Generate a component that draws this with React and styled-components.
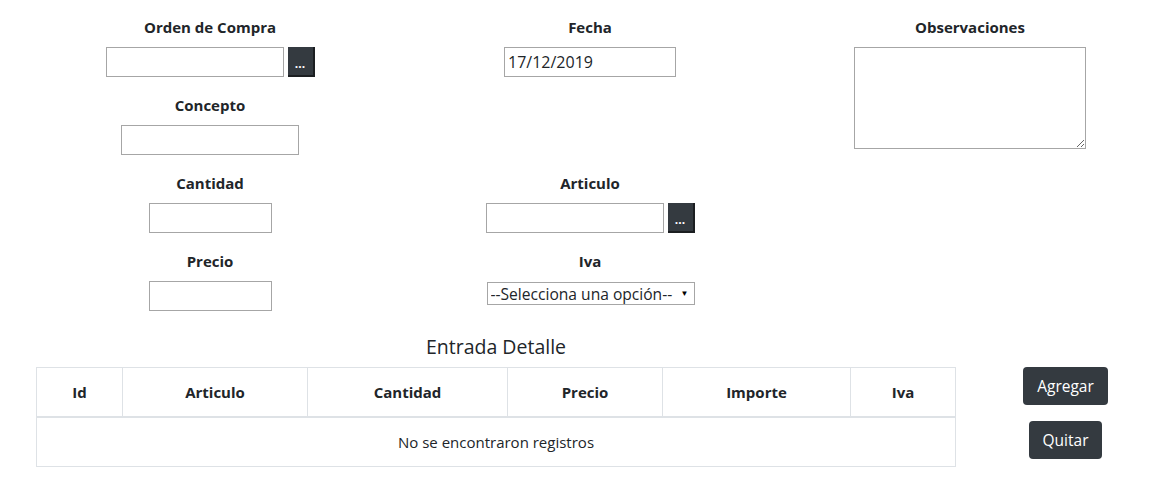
import styled, { createGlobalStyle } from "styled-components";

const GlobalStyle = createGlobalStyle`
  body {
    margin: 0;
    background: #ffffff;
    font-family: "Open Sans", "Noto Sans", sans-serif;
    font-size: 16px;
    color: #212529;
  }
  * {
    box-sizing: border-box;
  }
`;

export default function App() {
  return (
    <>
      <GlobalStyle />
      <Page>
        <FormGrid>
          <Group>
            <Label>Orden de Compra</Label>
            <Field>
              <Input width="178px" />
              <DotsButton>...</DotsButton>
            </Field>
          </Group>
          <Group>
            <Label>Fecha</Label>
            <Field>
              <Input width="172px" defaultValue="17/12/2019" />
            </Field>
          </Group>
          <ObsGroup>
            <Label>Observaciones</Label>
            <Field>
              <TextArea />
            </Field>
          </ObsGroup>

          <Group>
            <Label>Concepto</Label>
            <Field>
              <Input width="178px" />
            </Field>
          </Group>
          <Group />

          <Group>
            <Label>Cantidad</Label>
            <Field>
              <Input width="123px" />
            </Field>
          </Group>
          <Group>
            <Label>Articulo</Label>
            <Field>
              <Input width="178px" />
              <DotsButton>...</DotsButton>
            </Field>
          </Group>
          <Group />

          <Group>
            <Label>Precio</Label>
            <Field>
              <Input width="123px" />
            </Field>
          </Group>
          <Group>
            <Label>Iva</Label>
            <Field>
              <SelectBox>
                <Select defaultValue="">
                  <option value="">--Selecciona una opción--</option>
                </Select>
                <Arrow>▼</Arrow>
              </SelectBox>
            </Field>
          </Group>
        </FormGrid>

        <DetailRow>
          <TableCol>
            <Heading>Entrada Detalle</Heading>
            <Table>
              <thead>
                <tr>
                  <Th w="86px">Id</Th>
                  <Th w="185px">Articulo</Th>
                  <Th w="200px">Cantidad</Th>
                  <Th w="155px">Precio</Th>
                  <Th w="188px">Importe</Th>
                  <Th>Iva</Th>
                </tr>
              </thead>
              <tbody>
                <tr>
                  <Td colSpan={6}>No se encontraron registros</Td>
                </tr>
              </tbody>
            </Table>
          </TableCol>
          <ButtonCol>
            <DarkButton>Agregar</DarkButton>
            <DarkButton>Quitar</DarkButton>
          </ButtonCol>
        </DetailRow>
      </Page>
    </>
  );
}

const Page = styled.div`
  width: 1140px;
  margin-left: 20px;
  padding-top: 15px;
`;

const FormGrid = styled.div`
  display: grid;
  grid-template-columns: repeat(3, 380px);
`;

const Group = styled.div`
  display: flex;
  flex-direction: column;
  align-items: center;
  padding: 0 15px;
  margin-bottom: 16px;
`;

const ObsGroup = styled(Group)`
  grid-row: 1 / 3;
  grid-column: 3;
`;

const Label = styled.label`
  font-weight: 700;
  font-size: 15px;
  line-height: 24px;
  margin-bottom: 8px;
`;

const Field = styled.div`
  display: flex;
  gap: 4px;
  align-items: flex-start;
`;

const Input = styled.input`
  width: ${(p) => p.width};
  height: 30px;
  border: 1px solid #a6a6a6;
  padding: 1px 3px;
  font-family: inherit;
  font-size: 16px;
  color: #212529;
  outline: none;
`;

const DotsButton = styled.button`
  width: 27px;
  height: 30px;
  background: #343a40;
  color: #ffffff;
  border: none;
  border-right: 2px solid #1b1e21;
  border-bottom: 2px solid #1b1e21;
  font-family: inherit;
  font-size: 12px;
  font-weight: 700;
  padding: 6px 0 0;
  line-height: 1;
`;

const TextArea = styled.textarea`
  width: 232px;
  height: 102px;
  border: 1px solid #a6a6a6;
  font-family: inherit;
  resize: both;
  outline: none;
`;

const SelectBox = styled.div`
  position: relative;
  width: 208px;
  height: 23px;
  margin-top: 1px;
  margin-left: 1px;
`;

const Select = styled.select`
  appearance: none;
  width: 100%;
  height: 100%;
  border: 1px solid #a6a6a6;
  border-radius: 0;
  background: #ffffff;
  padding: 0 0 0 3px;
  font-family: inherit;
  font-size: 15.6px;
  color: #212529;
  outline: none;
`;

const Arrow = styled.span`
  position: absolute;
  right: 6px;
  top: 5px;
  font-size: 8px;
  color: #000000;
  pointer-events: none;
`;

const DetailRow = styled.div`
  display: flex;
`;

const TableCol = styled.div`
  width: 951px;
  padding: 0 15px 0 16px;
`;

const Heading = styled.h4`
  margin: 8px 0 8px;
  text-align: center;
  font-size: 19.5px;
  font-weight: 500;
  line-height: 24px;
`;

const Table = styled.table`
  width: 920px;
  border-collapse: collapse;
  border: 1px solid #dee2e6;
`;

const Th = styled.th`
  width: ${(p) => p.w || "auto"};
  height: 49px;
  border: 1px solid #dee2e6;
  border-bottom: 2px solid #dee2e6;
  font-size: 15px;
  font-weight: 700;
  text-align: center;
  vertical-align: middle;
`;

const Td = styled.td`
  height: 50px;
  border: 1px solid #dee2e6;
  text-align: center;
  font-size: 15px;
`;

const ButtonCol = styled.div`
  width: 189px;
  padding: 40px 15px 0;
  display: flex;
  flex-direction: column;
  align-items: center;
  gap: 16px;
`;

const DarkButton = styled.button`
  height: 38px;
  padding: 0 14px;
  background: #343a40;
  color: #ffffff;
  border: none;
  border-radius: 4px;
  font-family: inherit;
  font-size: 15.5px;
`;
